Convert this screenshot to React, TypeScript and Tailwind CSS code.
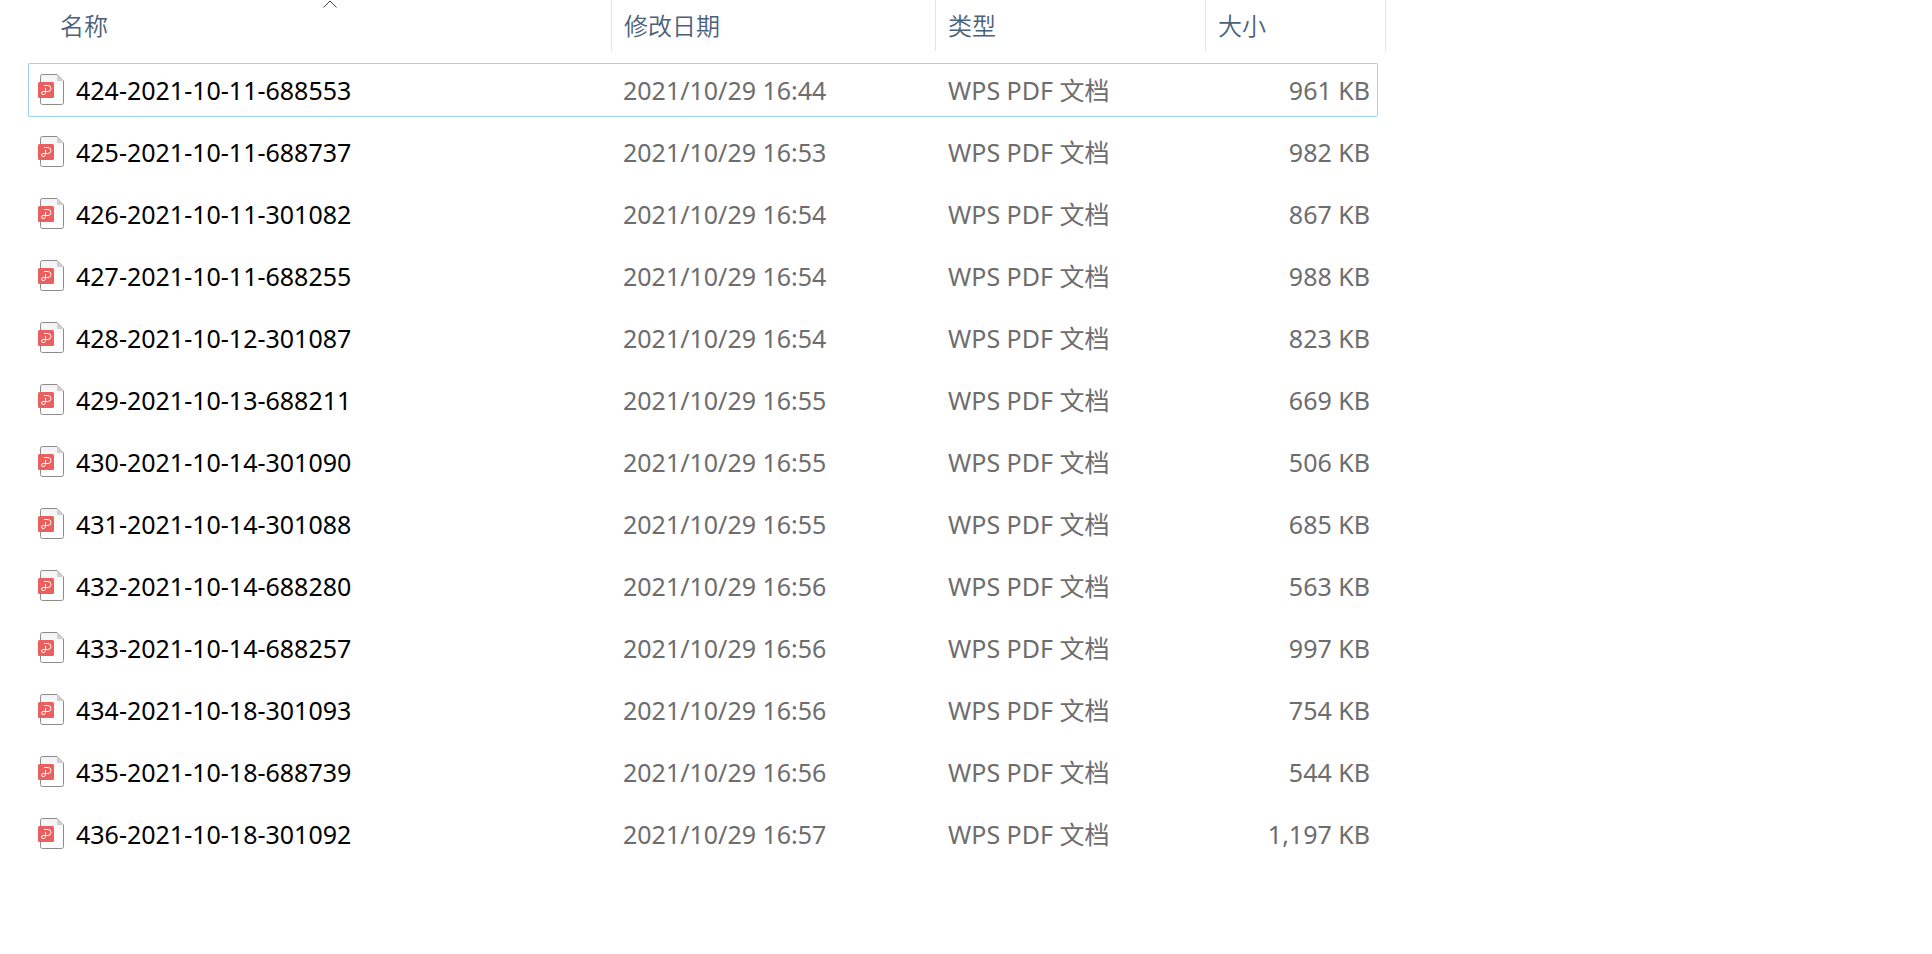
import { useId, useState } from "react";
import { clsx } from "clsx";

const FILES = [
  { name: "424-2021-10-11-688553", modified: "2021/10/29 16:44", size: "961 KB" },
  { name: "425-2021-10-11-688737", modified: "2021/10/29 16:53", size: "982 KB" },
  { name: "426-2021-10-11-301082", modified: "2021/10/29 16:54", size: "867 KB" },
  { name: "427-2021-10-11-688255", modified: "2021/10/29 16:54", size: "988 KB" },
  { name: "428-2021-10-12-301087", modified: "2021/10/29 16:54", size: "823 KB" },
  { name: "429-2021-10-13-688211", modified: "2021/10/29 16:55", size: "669 KB" },
  { name: "430-2021-10-14-301090", modified: "2021/10/29 16:55", size: "506 KB" },
  { name: "431-2021-10-14-301088", modified: "2021/10/29 16:55", size: "685 KB" },
  { name: "432-2021-10-14-688280", modified: "2021/10/29 16:56", size: "563 KB" },
  { name: "433-2021-10-14-688257", modified: "2021/10/29 16:56", size: "997 KB" },
  { name: "434-2021-10-18-301093", modified: "2021/10/29 16:56", size: "754 KB" },
  { name: "435-2021-10-18-688739", modified: "2021/10/29 16:56", size: "544 KB" },
  { name: "436-2021-10-18-301092", modified: "2021/10/29 16:57", size: "1,197 KB" },
];

function PdfIcon() {
  const id = useId();

  return (
    <svg width="26" height="31" viewBox="0 0 26 31" fill="none" className="shrink-0" aria-hidden="true">
      <defs>
        <linearGradient id={id} x1="0" y1="0" x2="0" y2="1">
          <stop offset="0" stopColor="#f2f2f2" />
          <stop offset="0.5" stopColor="#fff" />
        </linearGradient>
      </defs>
      <path
        d="M4.5.5H19L25.5 7v21.5a2 2 0 0 1-2 2h-19a2 2 0 0 1-2-2v-26a2 2 0 0 1 2-2z"
        fill={`url(#${id})`}
        stroke="#8c8c8c"
      />
      <path d="M19 .5V6a1 1 0 0 0 1 1h5.5z" fill="#cfcfcf" />
      <rect y="8" width="16" height="16" rx="1.5" fill="#eb5f5f" />
      <path
        d="M6 11.5h4a3 3 0 0 1 0 6H5a1.500 1.500 0 1 0 0 3c2 0 2.500-1 2.500-3v-3.500"
        stroke="#fff"
      />
    </svg>
  );
}

function HeaderCell({ label, first, last }: { label: string; first?: boolean; last?: boolean }) {
  return (
    <th
      scope="col"
      colSpan={last ? 2 : 1}
      aria-sort={first ? "ascending" : undefined}
      className="p-0 pb-1 text-left font-[350]"
    >
      <button
        type="button"
        className={clsx(
          "relative flex h-[51px] w-full items-center text-2xl text-[#4c607a]",
          first ? "pl-8" : "border-l border-[#e5e5e5] pl-3",
          last && "border-r"
        )}
      >
        {label}
        {first && (
          <svg
            width="14"
            height="8"
            viewBox="0 0 14 8"
            fill="none"
            className="absolute top-0 left-1/2 ml-[3px]"
            aria-hidden="true"
          >
            <path d="M.5 7.5 7 1l6.500 6.500" stroke="#4a4a4a" />
          </svg>
        )}
      </button>
    </th>
  );
}

export default function App() {
  const [selected, setSelected] = useState(FILES[0].name);

  return (
    <main className="min-h-screen bg-white pl-7 font-['Noto_Sans','Noto_Sans_CJK_SC',sans-serif]">
      <table className="-mt-2 w-full max-w-[1358px] table-fixed border-separate border-spacing-x-0 border-spacing-y-2">
        <colgroup>
          <col />
          <col className="w-[324px]" />
          <col className="w-[270px]" />
          <col className="w-[173px]" />
          <col className="w-2" />
        </colgroup>
        <thead>
          <tr>
            <HeaderCell label="名称" first />
            <HeaderCell label="修改日期" />
            <HeaderCell label="类型" />
            <HeaderCell label="大小" last />
          </tr>
        </thead>
        <tbody>
          {FILES.map((file) => {
            const cell = clsx(
              "h-[54px] border-y p-0 whitespace-nowrap",
              selected === file.name ? "border-[#99d1ff]" : "border-transparent"
            );
            return (
              <tr
                key={file.name}
                onClick={() => setSelected(file.name)}
                className="text-[25px] leading-8 text-[#6d6d6d]"
              >
                <td className={clsx(cell, "rounded-l-xs border-l pl-[9px] text-black")}>
                  <div className="flex items-start gap-3">
                    <PdfIcon />
                    {file.name}
                  </div>
                </td>
                <td className={clsx(cell, "pl-3")}>{file.modified}</td>
                <td className={clsx(cell, "pl-[13px]")}>WPS PDF 文档</td>
                <td className={clsx(cell, "rounded-r-xs border-r pr-[7px] text-right")}>{file.size}</td>
              </tr>
            );
          })}
        </tbody>
      </table>
    </main>
  );
}
